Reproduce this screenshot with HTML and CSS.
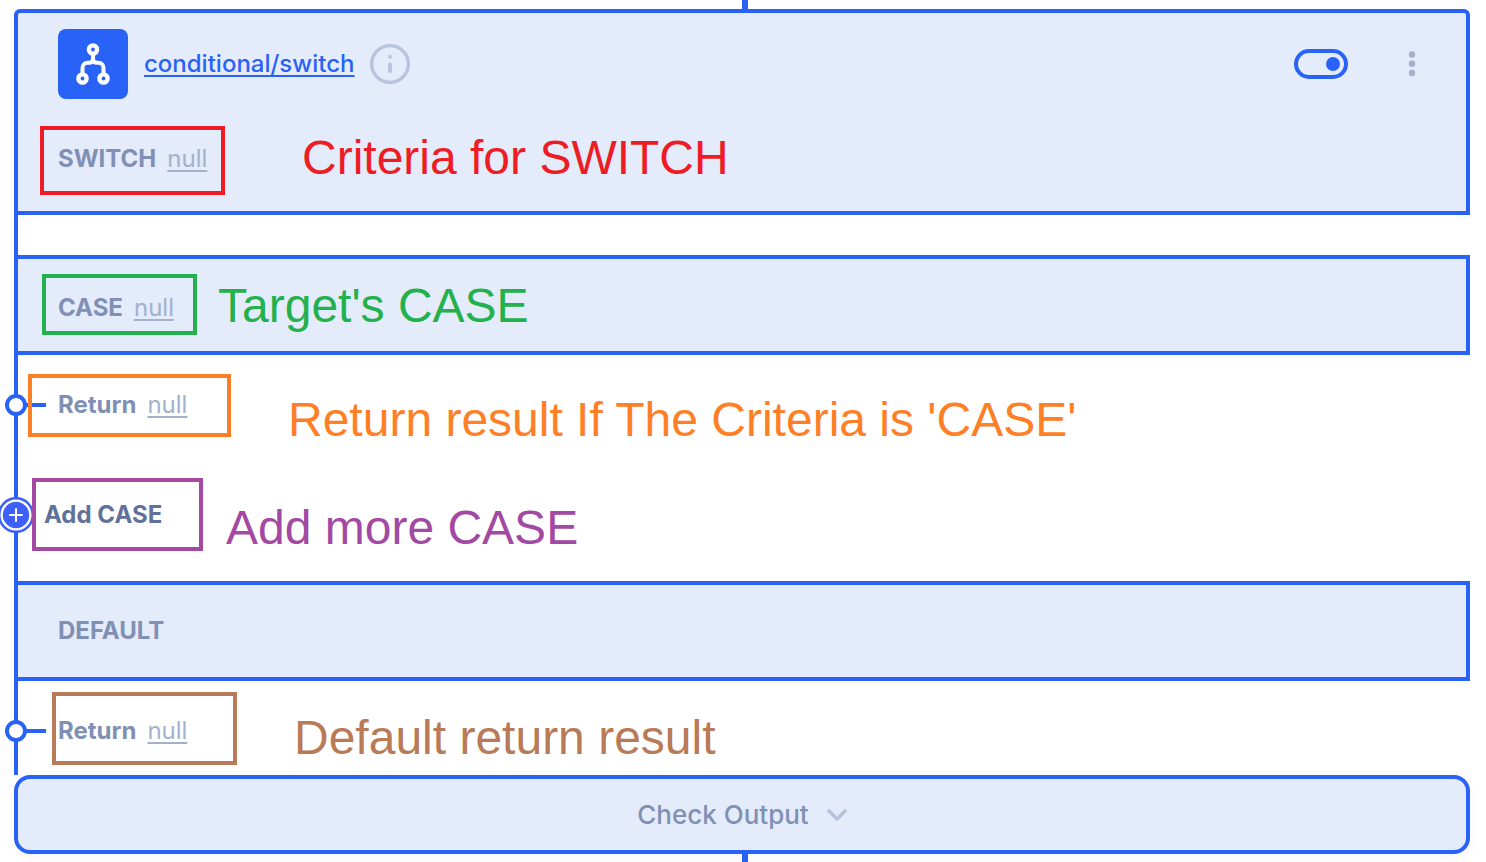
FILE: index.html
```html
<!DOCTYPE html>
<html lang="en">
<head>
<meta charset="utf-8">
<title>conditional/switch</title>
<link rel="stylesheet" href="styles.css">
</head>
<body>
<main class="flow">
  <div class="connector connector-in"></div>
  <div class="rail">
    <section class="panel panel-switch">
      <header class="head">
        <span class="logo">
          <svg width="70" height="70" viewBox="0 0 70 70" fill="none" stroke="#fff" stroke-width="4.4" stroke-linecap="round" aria-hidden="true">
            <circle cx="35" cy="20.500" r="4.100"/>
            <circle cx="24.500" cy="49.500" r="4.100"/>
            <circle cx="45.500" cy="49.500" r="4.100"/>
            <path d="M35 25v5c0 2.500-1.500 3.800-4 3.800h-1.500c-3 0-5 2.200-5 5.200V45M35 30c0 2.500 1.500 3.800 4 3.800h1.500c3 0 5 2.200 5 5.200V45" stroke-width="4"/>
          </svg>
        </span>
        <a class="title" href="#">conditional/switch</a>
        <button class="info" type="button" aria-label="Info">
          <svg width="40" height="40" viewBox="0 0 40 40" fill="none" stroke="#b8c4dd" aria-hidden="true">
            <circle cx="20" cy="20" r="18.400" stroke-width="3.300"/>
            <path d="M20 20.500v6.500" stroke-width="4" stroke-linecap="round"/>
            <circle cx="20" cy="12.800" r="2" fill="#b8c4dd" stroke="none"/>
          </svg>
        </button>
        <input class="toggle" type="checkbox" aria-label="Enabled" checked>
        <button class="menu" type="button" aria-label="Menu">
          <svg width="24" height="30" viewBox="0 0 24 30" fill="#a3b1cd" aria-hidden="true">
            <circle cx="12" cy="5.500" r="3.200"/><circle cx="12" cy="14.800" r="3.200"/><circle cx="12" cy="24" r="3.200"/>
          </svg>
        </button>
      </header>
      <div class="field"><b>SWITCH</b><a class="value" href="#">null</a></div>
      <span class="frame frame-switch"></span>
      <span class="note note-switch">Criteria for SWITCH</span>
    </section>

    <section class="panel panel-case">
      <div class="field"><b>CASE</b><a class="value" href="#">null</a></div>
      <span class="frame frame-case"></span>
      <span class="note note-case">Target's CASE</span>
    </section>

    <section class="row">
      <span class="node"></span>
      <div class="field"><b>Return</b><a class="value" href="#">null</a></div>
      <span class="frame frame-return"></span>
      <span class="note note-return">Return result If The Criteria is 'CASE'</span>
    </section>

    <section class="row row-add">
      <button class="add" type="button">
        <svg class="plus" width="36" height="36" viewBox="0 0 36 36" aria-hidden="true">
          <circle cx="18" cy="18" r="16.800" fill="#fff" stroke="#3f60f8" stroke-width="2.500"/>
          <circle cx="18" cy="18" r="13.200" fill="#3f60f8"/>
          <path d="M12 18h12M18 12v12" stroke="#fff" stroke-width="2" stroke-linecap="round"/>
        </svg>
        Add CASE
      </button>
      <span class="frame frame-add"></span>
      <span class="note note-add">Add more CASE</span>
    </section>

    <section class="panel panel-default">
      <div class="field"><b>DEFAULT</b></div>
    </section>

    <section class="row">
      <span class="node"></span>
      <div class="field"><b>Return</b><a class="value" href="#">null</a></div>
      <span class="frame frame-fallback"></span>
      <span class="note note-fallback">Default return result</span>
    </section>
  </div>
  <button class="output" type="button">
    Check Output
    <svg width="20" height="14" viewBox="0 0 20 14" fill="none" stroke="#b8c4dd" stroke-width="3.600" stroke-linecap="round" stroke-linejoin="round" aria-hidden="true"><path d="M2 3l8 8 8-8"/></svg>
  </button>
  <div class="connector connector-out"></div>
</main>
</body>
</html>
```
FILE: styles.css
```css
* { box-sizing: border-box; }

body {
  margin: 0;
  background: #fff;
  font-family: Inter, "Liberation Sans", sans-serif;
  font-size: 24px;
  line-height: 30px;
  color: #8090b4;
  overflow-x: hidden;
}

button {
  padding: 0;
  border: 0;
  background: none;
  font: inherit;
  color: inherit;
}

svg { display: block; }

.flow {
  display: flex;
  flex-direction: column;
  padding: 0 16px 0 14px;
}

.connector {
  align-self: center;
  width: 6px;
  margin-left: 6px;
  background: #2962f6;
}
.connector-in { height: 9px; }
.connector-out { height: 8px; }

.rail { background: linear-gradient(#2962f6, #2962f6) 0 20px / 4px 100% no-repeat; padding-left: 4px; }

.panel {
  position: relative;
  padding: 0 42px 0 40px;
  background: #e4ebfa;
  border: 4px solid #2962f6;
  border-left: 0;
}
.panel-switch {
  margin: 0 0 40px -4px;
  padding-top: 16px;
  padding-bottom: 37px;
  border-left: 4px solid #2962f6;
  border-radius: 6px 6px 0 0;
}
.panel-case { padding-top: 34px; padding-bottom: 28px; }
.panel-default { padding-top: 31px; padding-bottom: 31px; }

.head {
  display: flex;
  align-items: center;
  margin-bottom: 45px;
}
.logo {
  border-radius: 8px;
  background: #2962f6;
}
.title {
  margin: 0 16px;
  font-weight: 500;
  color: #2962f6;
  text-decoration-thickness: 2px;
  text-underline-offset: 3px;
}
.toggle {
  appearance: none;
  display: flex;
  align-items: center;
  justify-content: flex-end;
  width: 54px;
  height: 30px;
  margin: 0 52px 0 auto;
  padding-right: 4px;
  border: 4px solid #2962f6;
  border-radius: 15px;
}
.toggle::before {
  content: "";
  width: 14px;
  height: 14px;
  border-radius: 50%;
  background: #2962f6;
}

.field { display: flex; gap: 11px; }
.field b { font-weight: 700; }
.value {
  color: #a3b1cd;
  text-decoration-thickness: 2px;
  text-underline-offset: 3px;
}

.row {
  position: relative;
  padding: 35px 40px 29px;
}
.row-add { padding: 51px 26px; }
.add {
  display: block;
  font-weight: 700;
  color: #60719a;
}
.plus {
  position: absolute;
  left: -20px;
  top: 48px;
}
.node {
  position: absolute;
  left: -13px;
  top: 39px;
  width: 22px;
  height: 22px;
  border: 4px solid #2962f6;
  border-radius: 50%;
  background: #fff;
}
.node::after {
  content: "";
  position: absolute;
  left: 17px;
  top: 5px;
  width: 20px;
  height: 4px;
  background: #2962f6;
}

.output {
  display: flex;
  align-items: center;
  justify-content: center;
  gap: 18px;
  padding: 21px 0 20px;
  border: 4px solid #2962f6;
  border-radius: 16px;
  background: #e4ebfa;
  box-shadow: 0 4px 16px rgba(0, 0, 0, 0.03);
  font-size: 26px;
  font-weight: 500;
}

/* Annotations laid over the diagram */
.frame {
  position: absolute;
  border: 4px solid;
}
.note {
  position: absolute;
  font: 48px/56px "Liberation Sans", Arial, sans-serif;
  white-space: nowrap;
}
.frame-switch { left: 22px; top: 113px; width: 185px; height: 69px; }
.note-switch { left: 284px; top: 117px; }
.frame-switch, .note-switch { color: #ee1c25; }

.frame-case { left: 24px; top: 15px; width: 155px; height: 61px; }
.note-case { left: 200px; top: 19px; }
.frame-case, .note-case { color: #23b14d; }

.frame-return { left: 10px; top: 19px; width: 203px; height: 63px; }
.note-return { left: 270px; top: 37px; }
.frame-return, .note-return { color: #ff7f27; }

.frame-add { left: 14px; top: 29px; width: 171px; height: 73px; }
.note-add { left: 208px; top: 51px; }
.frame-add, .note-add { color: #a349a3; }

.frame-fallback { left: 34px; top: 11px; width: 185px; height: 73px; }
.note-fallback { left: 276px; top: 29px; }
.frame-fallback, .note-fallback { color: #b97a57; }
```
